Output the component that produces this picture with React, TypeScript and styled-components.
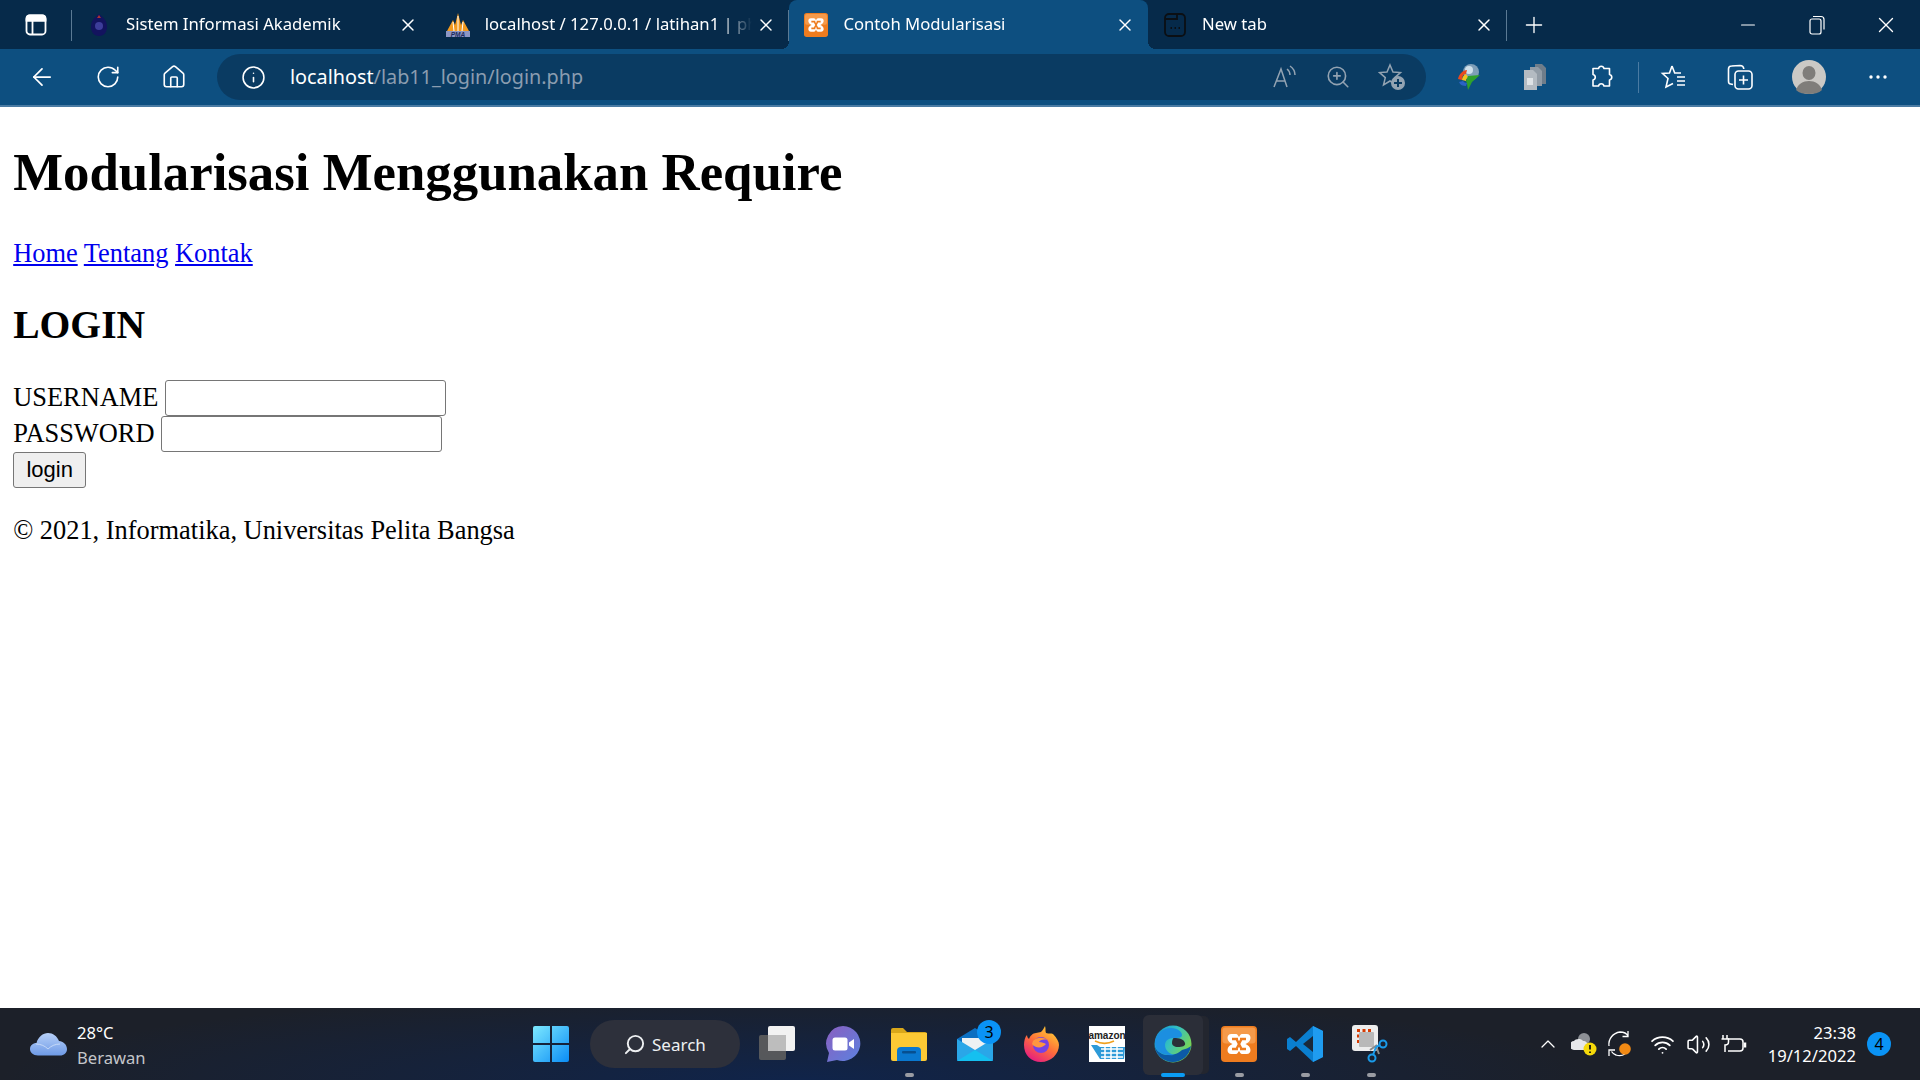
import React, { FC, ReactNode } from 'react';
import styled, { createGlobalStyle } from 'styled-components';
import { ArrowLeft, ChevronUp, Home as HomeIcon, Info, Minus, Plus, RotateCw, Search, Volume2, Wifi, X, ZoomIn } from 'lucide-react';

const UI_FONT = '"Noto Sans", "Open Sans", sans-serif';
const STRIP = '#062a4a';
const TOOLBAR = '#0d4f80';

const GlobalStyle = createGlobalStyle`
	html, body {
		margin: 0;
		padding: 0;
		background: #fff;
	}
`;

const Screen = styled.div`
	display: flex;
	flex-direction: column;
	width: 1920px;
	height: 1080px;
	overflow: hidden;
`;

const TabStrip = styled.div`
	display: flex;
	flex: none;
	height: 49px;
	background: ${STRIP};
	color: #fff;
	font-family: ${UI_FONT};
	font-size: 16.7px;
`;

const WorkspaceButton = styled.div`
	display: flex;
	flex: none;
	align-items: center;
	justify-content: center;
	width: 72px;
	height: 49px;
	position: relative;

	&::after {
		content: '';
		position: absolute;
		right: 0;
		top: 10px;
		width: 1px;
		height: 31px;
		background: #5b7a94;
	}
`;

const Tab = styled.div<{ $active?: boolean; $divider?: boolean }>`
	display: flex;
	flex: none;
	align-items: center;
	position: relative;
	width: 358.7px;
	height: 49px;
	border-radius: 8px 8px 0 0;
	background: ${(p) => (p.$active ? TOOLBAR : 'transparent')};

	&::after {
		content: ${(p) => (p.$divider ? "''" : 'none')};
		position: absolute;
		right: 0;
		top: 10px;
		width: 1px;
		height: 31px;
		background: #5b7a94;
	}

	${(p) =>
		p.$active &&
		`
		&::before {
			content: '';
			position: absolute;
			left: -8px;
			right: -8px;
			bottom: 0;
			height: 8px;
			z-index: 0;
			background:
				radial-gradient(circle at 0 0, transparent 8px, ${TOOLBAR} 8px) left bottom / 8px 8px no-repeat,
				radial-gradient(circle at 100% 0, transparent 8px, ${TOOLBAR} 8px) right bottom / 8px 8px no-repeat;
		}
	`}
`;

const Favicon = styled.div`
	display: flex;
	flex: none;
	align-items: center;
	justify-content: center;
	width: 54px;
	height: 30px;
	position: relative;
`;

const TabTitle = styled.div`
	flex: 1;
	min-width: 0;
	margin-top: -2px;
	overflow: hidden;
	white-space: nowrap;
	position: relative;
	mask-image: linear-gradient(to right, #000 88%, transparent 100%);
`;

const TabClose = styled.div`
	display: flex;
	flex: none;
	align-items: center;
	justify-content: center;
	width: 24px;
	height: 24px;
	margin: 0 11px 0 2px;
	position: relative;
`;

const NewTabButton = styled.div`
	display: flex;
	align-items: center;
	justify-content: center;
	width: 54px;
	height: 49px;
`;

const WindowControls = styled.div`
	display: flex;
	margin-left: auto;
`;

const WindowButton = styled.div`
	display: flex;
	align-items: center;
	justify-content: center;
	width: 69px;
	height: 49px;
`;

const Toolbar = styled.div`
	display: flex;
	flex: none;
	align-items: center;
	height: 56px;
	padding: 0 10px 0 9px;
	background: ${TOOLBAR};
	border-bottom: 2px solid #4a7ba3;
`;

const NavButton = styled.div`
	display: flex;
	flex: none;
	align-items: center;
	justify-content: center;
	width: 66px;
	height: 46px;
`;

const AddressBar = styled.div`
	display: flex;
	flex: none;
	align-items: center;
	box-sizing: border-box;
	width: 1209px;
	height: 46px;
	margin-left: 10px;
	padding-right: 7px;
	border-radius: 23px;
	background: #0a3b62;
	font-family: ${UI_FONT};
	font-size: 19.8px;
`;

const SiteInfo = styled.div`
	display: flex;
	flex: none;
	align-items: center;
	justify-content: center;
	width: 73px;
	color: #fff;
`;

const Url = styled.div`
	flex: 1;
	margin-top: -2px;
	color: #8b9db0;
	white-space: nowrap;
`;

const UrlHost = styled.span`
	color: #fff;
`;

const AddressAction = styled.div`
	display: flex;
	flex: none;
	align-items: center;
	justify-content: center;
	width: 54px;
	color: #93a3b2;
`;

const ToolbarIcons = styled.div`
	display: flex;
	flex: none;
	align-items: center;
	margin-left: 10px;
`;

const ToolIcon = styled.div<{ $wide?: boolean }>`
	display: flex;
	flex: none;
	align-items: center;
	justify-content: center;
	width: ${(p) => (p.$wide ? 72 : 66)}px;
	height: 46px;
	color: #fff;
`;

const ToolDivider = styled.div`
	flex: none;
	width: 1px;
	height: 31px;
	margin: 0 2px 0 4px;
	background: #4a7ba3;
`;

const Page = styled.main`
	flex: 1;
	padding: 0 13.2px;
	background: #fff;
	color: #000;
	font-family: 'Liberation Serif', 'Times New Roman', serif;
	font-size: 26.4px;
`;

const Heading = styled.h1`
	margin: 35.4px 0;
	font-size: 52.8px;
	font-weight: 700;
`;

const NavLinks = styled.nav`
	margin: 26.4px 0;
`;

const NavLink = styled.a`
	color: #0000ee;
	text-decoration: underline;
`;

const LoginHeading = styled.h2`
	margin: 32.9px 0 32px;
	font-size: 39.6px;
	font-weight: 700;
`;

const FormRow = styled.div`
	display: flex;
	align-items: center;
	gap: 6.6px;
	height: 36px;
`;

const TextInput = styled.input`
	box-sizing: border-box;
	width: 281px;
	height: 36px;
	padding: 1px 3px;
	border: 1px solid #767676;
	border-radius: 3px;
	background: #fff;
`;

const SubmitButton = styled.button`
	display: block;
	box-sizing: border-box;
	width: 73px;
	height: 36px;
	padding: 0;
	border: 1px solid #767676;
	border-radius: 3px;
	background: #efefef;
	color: #000;
	font-family: 'Liberation Sans', Arial, sans-serif;
	font-size: 22px;
`;

const Footer = styled.footer`
	margin-top: 27.4px;
`;

const Taskbar = styled.footer`
	display: flex;
	flex: none;
	align-items: center;
	height: 72px;
	background: radial-gradient(ellipse 800px 90px at 800px 100%, #10244a 0%, rgba(16, 36, 74, 0) 100%), #1c2029;
	color: #fff;
	font-family: ${UI_FONT};
	font-size: 16.6px;
`;

const Weather = styled.div`
	display: flex;
	flex: none;
	align-items: center;
	gap: 10px;
	box-sizing: border-box;
	width: 518px;
	padding-left: 30px;
`;

const WeatherText = styled.div`
	line-height: 25px;
	margin-top: 1px;
`;

const WeatherNote = styled.div`
	color: #c4c6ca;
`;

const TaskSlot = styled.div<{ $active?: boolean }>`
	display: flex;
	flex: none;
	align-items: center;
	justify-content: center;
	position: relative;
	width: 66px;
	height: 72px;

	${(p) =>
		p.$active &&
		`
		&::before {
			content: '';
			position: absolute;
			left: 3px;
			top: 7px;
			width: 60px;
			height: 60px;
			border-radius: 6px;
			background: #2b2e38;
			box-shadow: 7px 0 0 -1px #23262f;
		}
		& > svg { position: relative; }
	`}
`;

const Indicator = styled.span<{ $active?: boolean }>`
	position: absolute;
	left: 50%;
	bottom: 3px;
	width: ${(p) => (p.$active ? 24 : 9)}px;
	height: 4px;
	margin-left: ${(p) => (p.$active ? -12 : -4.5)}px;
	border-radius: 2px;
	background: ${(p) => (p.$active ? '#0a9cf5' : '#9a9ca3')};
`;

const CountBadge = styled.span`
	position: absolute;
	display: flex;
	align-items: center;
	justify-content: center;
	border-radius: 50%;
	background: #0a93f5;
	color: #000;
	font-size: 16px;
	right: 7px;
	top: 12px;
	width: 24px;
	height: 24px;
`;

const SearchPill = styled.div`
	display: flex;
	flex: none;
	align-items: center;
	gap: 6px;
	box-sizing: border-box;
	width: 150px;
	height: 48px;
	margin: 0 4px 0 6px;
	padding-left: 33px;
	border-radius: 24px;
	background: #2d303b;
	color: #eef0f2;
	font-size: 17px;
`;

const SearchGlyph = styled(Search)`
	transform: scaleX(-1);
`;

const Tray = styled.div`
	display: flex;
	flex: none;
	align-items: center;
	margin-left: auto;
	padding-right: 29px;
`;

const TrayIcon = styled.div<{ $wide?: boolean }>`
	display: flex;
	align-items: center;
	justify-content: center;
	width: 36px;
	height: 36px;
	margin-right: ${(p) => (p.$wide ? 6 : 0)}px;
`;

const Clock = styled.div`
	width: 104px;
	text-align: right;
	font-size: 16.6px;
	line-height: 23px;
`;

const NotifyBadge = styled.div`
	display: flex;
	align-items: center;
	justify-content: center;
	width: 24px;
	height: 24px;
	margin-left: 11px;
	border-radius: 50%;
	background: #0a93f5;
	color: #000;
	font-size: 16px;
`;

const Workspace = () => (
	<svg width="22" height="22" viewBox="0 0 22 22" fill="none" stroke="#fff" strokeWidth="1.8">
		<rect x="1.5" y="1.5" width="19" height="19" rx="3.5" />
		<path d="M1.5 6.5h19M7.5 6.5v14" />
		<path d="M4 1.500h14a3 3 0 0 1 2.500 3v2h-19v-2a3 3 0 0 1 2.500-3z" fill="#fff" />
	</svg>
);

const CampusLogo = () => (
	<svg width="20" height="24" viewBox="0 0 20 24">
		<path d="M10 1C5 5 2 8 2 14c0 5 3 9 8 9s8-4 8-9c0-6-3-9-8-13z" fill="#13135e" />
		<circle cx="10" cy="13" r="4" fill="#3d3d9a" />
		<path d="M8 5h4l-2-3z" fill="#a33" />
	</svg>
);

const PmaLogo = () => (
	<svg width="26" height="26" viewBox="0 0 26 26">
		<path d="M2 19L8 8l2 5 3-12 3 12 2-5 6 11z" fill="#f29a1f" />
		<path d="M8 10l1 9M13 4v15M18 10l-1 9" stroke="#fff" strokeWidth="1" />
		<rect x="1" y="19" width="24" height="6" fill="#8c96c4" />
		<text x="13" y="24.500" textAnchor="middle" fontSize="6.5" fontWeight="700" fontStyle="italic" fill="#1d2a5c" fontFamily="Liberation Sans">PMA</text>
	</svg>
);

const XamppLogo: FC<{ size: number }> = ({ size }) => (
	<svg width={size} height={size} viewBox="0 0 36 36">
		<rect width="36" height="36" rx="4" fill="#ee7c1f" />
		<rect x="1.500" y="1.500" width="33" height="16" rx="3" fill="#f59a4a" />
		<path
			d="M15 8h-4.500C7.500 8 6.500 10 6.500 12c0 3 2.500 5 5 6-2.500 1-5 3-5 6 0 2 1 4 4 4H15c1.500 0 2-1.500 3-3 1 1.500 1.500 3 3 3h4.500c3 0 4-2 4-4 0-3-2.500-5-5-6 2.500-1 5-3 5-6 0-2-1-4-4-4H21c-1.500 0-2 1.500-3 3-1-1.500-1.500-3-3-3z"
			fill="#fff"
		/>
		<path d="M11 13h6M19 13h6M11 23h6M19 23h6M15.500 13l2.500 5-2.500 5M20.500 13L18 18l2.500 5" stroke="#ee7c1f" strokeWidth="2.400" fill="none" />
	</svg>
);

const NewTabIcon = () => (
	<svg width="22" height="24" viewBox="0 0 22 24" fill="none" stroke="#0b0f14" strokeWidth="1.800">
		<rect x="1" y="1" width="20" height="22" rx="4" />
		<path d="M1 6h12V1" />
		<path d="M6.500 15h1.500M10.500 15h1.500M14.500 15H16" strokeWidth="2" />
	</svg>
);

const ReadAloud = () => (
	<svg width="26" height="26" viewBox="0 0 26 26" fill="none" stroke="currentColor" strokeWidth="1.500">
		<path d="M3 23L10 5l6 18M5.500 17h9" />
		<path d="M16 5c2 1.500 3 3.500 3 6M19 2c3 2 5 5 5 9" />
	</svg>
);

const FavoriteAdd = () => (
	<svg width="28" height="28" viewBox="0 0 28 28" fill="none" stroke="currentColor" strokeWidth="1.500">
		<path d="M12 2l3 7 7.500.6-5.700 5 1.800 7.400L12 18l-6.500 4 1.800-7.400-5.700-5L9 9z" />
		<circle cx="20" cy="20" r="7" fill="currentColor" stroke="none" />
		<path d="M20 16v8M16 20h8" stroke="#0a3b62" strokeWidth="2" />
	</svg>
);

const IdmLogo = () => (
	<svg width="26" height="28" viewBox="0 0 26 28">
		<circle cx="15" cy="9" r="8" fill="#7f9fb8" />
		<circle cx="13" cy="7" r="4" fill="#cfe0ea" />
		<path d="M2 16c1-5 5-9 9-9l-1 4c-3 0-4 3-4 6z" fill="#e8491d" />
		<path d="M6 17c0-3 2-5 4-6l2 3c-1 1-2 2-2 4z" fill="#f4c31d" />
		<path d="M10 18l2-5 12-1-8 7-4 8-1-6z" fill="#2fa12c" />
		<path d="M3 19c1 3 4 4 7 4l1-3c-2 0-3-1-4-2z" fill="#2b62c4" />
	</svg>
);

const DocsIcon = () => (
	<svg width="24" height="28" viewBox="0 0 24 28">
		<path d="M12 1h7l4 4v16H12z" fill="#6f7d8a" />
		<path d="M7 4h8l4 4v15H7z" fill="#929ca6" />
		<path d="M1 7h9l4 4v16H1z" fill="#b4bbc2" />
		<rect x="4" y="15" width="6" height="7" fill="#dfe3e6" />
	</svg>
);

const PuzzlePiece = () => (
	<svg width="26" height="28" viewBox="0 0 26 28" fill="none" stroke="#fff" strokeWidth="1.600" strokeLinejoin="round">
		<path d="M7 5.500h3.500a2.800 2.800 0 0 1 5.500 0H21.500v6a2.800 2.800 0 0 1 0 5.500v6H16a2.800 2.800 0 0 0-5.500 0H5V17a2.800 2.800 0 0 0 0-5.500V5.500z" />
	</svg>
);

const FavoriteList = () => (
	<svg width="28" height="28" viewBox="0 0 28 28" fill="none" stroke="#fff" strokeWidth="1.600">
		<path d="M12 3l2.700 7H21M12 3L9.500 10 2.500 10.500 8 15.500 6 24l7-3.500" />
		<path d="M17 14h8M17 18h8M17 22h8" />
	</svg>
);

const Collections = () => (
	<svg width="28" height="28" viewBox="0 0 28 28" fill="none" stroke="#fff" strokeWidth="1.600">
		<path d="M7 21.500L4.500 21c-1.500 0-2-1.500-2-3V6c0-2 1.500-3 3-3L14 2.500c2 0 3.500 1 3.800 3.500" />
		<rect x="9" y="8" width="17" height="18" rx="3.500" />
		<path d="M17.500 12.500v9M13 17h9" />
	</svg>
);

const Avatar = () => (
	<svg width="34" height="34" viewBox="0 0 34 34">
		<circle cx="17" cy="17" r="17" fill="#cbc9c5" />
		<ellipse cx="17" cy="13" rx="6.500" ry="7" fill="#7f7d7a" />
		<path d="M4 30c2-6 7-9 13-9s11 3 13 9c-3 3-8 4-13 4S7 33 4 30z" fill="#7f7d7a" />
	</svg>
);

const MoreDots = () => (
	<svg width="20" height="6" viewBox="0 0 20 6" fill="#fff">
		<circle cx="3" cy="3" r="1.700" />
		<circle cx="10" cy="3" r="1.700" />
		<circle cx="17" cy="3" r="1.700" />
	</svg>
);

const WeatherCloud = () => (
	<svg width="37" height="24" viewBox="0 0 37 24">
		<defs>
			<linearGradient id="cloud" x1="0" y1="0" x2="0" y2="1">
				<stop offset="0" stopColor="#b7d0f8" />
				<stop offset="1" stopColor="#6e9ae6" />
			</linearGradient>
		</defs>
		<path d="M8 23.500C3 23.500 0 20.500 0 17c0-3.500 3-6 6.500-6C8 5 13 1 18 1c5 0 9 3 11 8 4 .5 8 3.500 8 8 0 4-3 6.500-7 6.500z" fill="url(#cloud)" />
		<path d="M6 12c5 0 9 2 12 5 3-3 7-5 12-5" stroke="#dbe8fb" strokeWidth="1" fill="none" opacity="0.7" />
	</svg>
);

const WindowsLogo = () => (
	<svg width="36" height="36" viewBox="0 0 36 36">
		<defs>
			<linearGradient id="win" x1="0" y1="0" x2="1" y2="1">
				<stop offset="0" stopColor="#7de9ff" />
				<stop offset="1" stopColor="#0a8cf5" />
			</linearGradient>
		</defs>
		<path d="M2 0h15v17H0V2a2 2 0 0 1 2-2zM19 0h15a2 2 0 0 1 2 2v15H19zM0 19h17v17H2a2 2 0 0 1-2-2zM19 19h17v15a2 2 0 0 1-2 2H19z" fill="url(#win)" />
	</svg>
);

const TaskView = () => (
	<svg width="36" height="36" viewBox="0 0 36 36">
		<rect x="9" y="0" width="27" height="25" rx="2" fill="#f2f2f2" />
		<rect x="0" y="9" width="27" height="25" rx="2" fill="#5e5e5e" fillOpacity="0.9" />
		<rect x="9" y="9" width="18" height="16" fill="#bdbdbd" />
	</svg>
);

const ChatLogo = () => (
	<svg width="36" height="36" viewBox="0 0 36 36">
		<defs>
			<linearGradient id="chat" x1="0" y1="0" x2="1" y2="1">
				<stop offset="0" stopColor="#8a5fc0" />
				<stop offset="1" stopColor="#5b82e0" />
			</linearGradient>
		</defs>
		<path d="M18 0a17.500 17.500 0 1 1-6 34l-10 2 2-9A17.500 17.500 0 0 1 18 0z" fill="url(#chat)" />
		<rect x="7.500" y="11.500" width="15" height="13" rx="2.500" fill="#fff" />
		<path d="M24 16.500l5-3.500v10l-5-3.500z" fill="#fff" />
	</svg>
);

const ExplorerLogo = () => (
	<svg width="36" height="34" viewBox="0 0 36 34">
		<path d="M0 3a2 2 0 0 1 2-2h10l4 4h18a2 2 0 0 1 2 2v6H0z" fill="#d9a71a" />
		<path d="M0 6h36v26a2 2 0 0 1-2 2H2a2 2 0 0 1-2-2z" fill="#fcc934" />
		<path d="M6 34V24a4 4 0 0 1 4-4h16a4 4 0 0 1 4 4v10z" fill="#0a78cf" />
		<rect x="11" y="24" width="14" height="2.500" rx="1" fill="#064f90" />
	</svg>
);

const MailLogo = () => (
	<svg width="36" height="34" viewBox="0 0 36 34">
		<path d="M0 12L18 1l18 11v22H0z" fill="#0b6fc2" />
		<path d="M5 11h26v10l-13 7L5 21z" fill="#eef1f3" />
		<path d="M0 12l18 11 18-11v20a2 2 0 0 1-2 2H2a2 2 0 0 1-2-2z" fill="#2aa6e8" />
		<path d="M0 34l18-11 18 11z" fill="#15c0f0" />
	</svg>
);

const FirefoxLogo = () => (
	<svg width="36" height="36" viewBox="0 0 36 36">
		<defs>
			<linearGradient id="fx" x1="0.8" y1="0" x2="0.2" y2="1">
				<stop offset="0" stopColor="#ffd533" />
				<stop offset="0.5" stopColor="#ff7139" />
				<stop offset="1" stopColor="#e31587" />
			</linearGradient>
		</defs>
		<path d="M22 0c1 3 0 5 1 7 3 1 5 0 7 1 4 4 6 8 6 11 0 9-8 17-18 17S1 29 1 19c0-4 1-8 3-10 0 2 1 3 2 4 1-3 4-6 7-6l5-1c2-2 3-4 4-6z" fill="url(#fx)" />
		<circle cx="18" cy="19" r="8" fill="#7542e5" />
		<path d="M10 15c4-4 10-4 15-1-5-1-8 0-9 2 3 0 5 1 7 2-4 5-11 4-14 0z" fill="#ff9640" />
	</svg>
);

const AmazonLogo = () => (
	<svg width="36" height="36" viewBox="0 0 36 36">
		<rect width="36" height="36" fill="#fff" />
		<text x="18" y="13" textAnchor="middle" fontSize="10" fontWeight="700" fill="#222" fontFamily="Liberation Sans">amazon</text>
		<path d="M6 15c6 3 13 3 19 0" stroke="#f0a01e" strokeWidth="1.500" fill="none" />
		<path d="M2 19h6l3 2h25l-1 12H11z" fill="#2d9ad8" />
		<path d="M12 23h22M12 27h22M12 31h22M16 21v12M22 21v12M28 21v12" stroke="#fff" strokeWidth="1.500" />
	</svg>
);

const EdgeLogo = () => (
	<svg width="38" height="38" viewBox="0 0 38 38">
		<defs>
			<linearGradient id="edge" x1="0" y1="0" x2="1" y2="0.6">
				<stop offset="0" stopColor="#0d8fd8" />
				<stop offset="0.5" stopColor="#35c1c0" />
				<stop offset="1" stopColor="#7fd64a" />
			</linearGradient>
		</defs>
		<circle cx="19" cy="19" r="18.500" fill="url(#edge)" />
		<path d="M19 37C9 37 .5 29 .5 19 .5 25 7 30 14 30c6 0 11-2 14-5 3-1 7-2 9-4-1 9-9 16-18 16z" fill="#0c5aa6" />
		<path d="M1 18C1 10 8 3 17 3c7 0 11 4 11 7 0 3-4 3-8 3-6 0-9 3-9 7 0 5 4 9 10 10C9 31 1 27 1 18z" fill="#1c8fe0" />
		<path d="M20 13c5 0 10 1 11 5 1 3-3 4-7 4-4 0-6-2-6-4 0-3 1-5 2-5z" fill="#2b2e38" />
	</svg>
);

const VsCodeLogo = () => (
	<svg width="36" height="36" viewBox="0 0 36 36">
		<path d="M26 0l10 5v26l-10 5L9 20 3 25l-3-2V13l3-2 6 5z" fill="#0a7fd0" />
		<path d="M26 0l10 5v26l-10 5z" fill="#1f9cf0" />
		<path d="M26 10v16l-10-8z" fill="#1c2029" opacity="0.9" />
	</svg>
);

const SnipLogo = () => (
	<svg width="38" height="38" viewBox="0 0 38 38">
		<rect x="0" y="0" width="26" height="26" rx="3" fill="#ededed" />
		<path d="M5 4h3v3H5zM10.500 4h3v3h-3zM16 4h3v3h-3zM5 9.500h3v3H5zM5 15h3v3H5z" fill="#d83b01" />
		<rect x="7" y="7" width="15" height="15" rx="1" fill="#b9b9b9" />
		<path d="M18 25l7-5M24 21l3 8" stroke="#8a8a8a" strokeWidth="2" />
		<circle cx="31" cy="19" r="3.500" fill="none" stroke="#1a9bea" strokeWidth="2" />
		<circle cx="20" cy="33" r="3.500" fill="none" stroke="#1a9bea" strokeWidth="2" />
		<path d="M28 20l-4 2M21 30l3-8" stroke="#1a9bea" strokeWidth="2" />
	</svg>
);

const OneDriveWarning = () => (
	<svg width="26" height="26" viewBox="0 0 26 26">
		<circle cx="13" cy="8" r="6" fill="#8d9096" />
		<path d="M3 19a4.500 4.500 0 0 1 0-9c1-2 7-3 9 0 3 0 5 2 5 5v4z" fill="#e7e8ea" />
		<circle cx="19" cy="18" r="6.500" fill="#f5d90a" />
		<path d="M19 14v4.500M19 20.500v1.500" stroke="#111" strokeWidth="1.800" />
	</svg>
);

const SyncDot = () => (
	<svg width="26" height="28" viewBox="0 0 26 28" fill="none" stroke="#fff" strokeWidth="1.300">
		<path d="M2 16C1 9 6 3 13 2c4 0 7 2 8 4M21 1v5.500h-5.500" />
		<path d="M18 24c-3 2-6 2-9 1-2-.5-3.500-2-4.500-3.500M2 26v-6h6" />
		<circle cx="18" cy="19" r="5.800" fill="#f28a14" stroke="none" />
	</svg>
);

const PlugBattery = () => (
	<svg width="26" height="22" viewBox="0 0 26 22" fill="none" stroke="#fff" strokeWidth="1.500">
		<path d="M2 2v4M6 2v4M.5 6h7v3c0 2-1.500 3-3.500 3v7" />
		<path d="M7 6h12c2 0 3 1 3 3v6c0 2-1 3-3 3H7" />
		<path d="M24 9.500v5" strokeWidth="2.500" />
	</svg>
);

const TrayList: { key: string; wide?: boolean; icon: ReactNode }[] = [
	{ key: 'chevron', icon: <ChevronUp size={24} color="#fff" strokeWidth={1.25} /> },
	{ key: 'cloud', icon: <OneDriveWarning /> },
	{ key: 'sync', wide: true, icon: <SyncDot /> },
	{ key: 'wifi', icon: <Wifi size={25} color="#fff" strokeWidth={1.75} /> },
	{ key: 'volume', icon: <Volume2 size={25} color="#fff" strokeWidth={1.5} /> },
	{ key: 'power', icon: <PlugBattery /> },
];

export default function App() {
	return (
		<Screen>
			<GlobalStyle />
			<TabStrip>
				<WorkspaceButton>
					<Workspace />
				</WorkspaceButton>
				<Tab>
					<Favicon>
						<CampusLogo />
					</Favicon>
					<TabTitle>Sistem Informasi Akademik</TabTitle>
					<TabClose>
						<X size={20} color="#fff" strokeWidth={1.75} />
					</TabClose>
				</Tab>
				<Tab $divider>
					<Favicon>
						<PmaLogo />
					</Favicon>
					<TabTitle>localhost / 127.0.0.1 / latihan1 | phpMyAdmin</TabTitle>
					<TabClose>
						<X size={20} color="#fff" strokeWidth={1.75} />
					</TabClose>
				</Tab>
				<Tab $active>
					<Favicon>
						<XamppLogo size={24} />
					</Favicon>
					<TabTitle>Contoh Modularisasi</TabTitle>
					<TabClose>
						<X size={20} color="#fff" strokeWidth={1.75} />
					</TabClose>
				</Tab>
				<Tab $divider>
					<Favicon>
						<NewTabIcon />
					</Favicon>
					<TabTitle>New tab</TabTitle>
					<TabClose>
						<X size={20} color="#fff" strokeWidth={1.75} />
					</TabClose>
				</Tab>
				<NewTabButton>
					<Plus size={26} color="#fff" strokeWidth={1.25} />
				</NewTabButton>
				<WindowControls>
					<WindowButton>
						<Minus size={22} color="#fff" strokeWidth={1.25} />
					</WindowButton>
					<WindowButton>
						<svg width="16" height="20" viewBox="0 0 16 20" fill="none" stroke="#fff" strokeWidth="1.200">
							<rect x="1" y="4" width="11" height="15" rx="2" />
							<path d="M4 1.500h8c2 0 3 1 3 3v10" />
						</svg>
					</WindowButton>
					<WindowButton>
						<X size={26} color="#fff" strokeWidth={1.25} />
					</WindowButton>
				</WindowControls>
			</TabStrip>
			<Toolbar>
				<NavButton>
					<ArrowLeft size={28} color="#fff" strokeWidth={1.5} />
				</NavButton>
				<NavButton>
					<RotateCw size={26} color="#fff" strokeWidth={1.5} />
				</NavButton>
				<NavButton>
					<HomeIcon size={26} color="#fff" strokeWidth={1.5} />
				</NavButton>
				<AddressBar>
					<SiteInfo>
						<Info size={25} strokeWidth={1.5} />
					</SiteInfo>
					<Url>
						<UrlHost>localhost</UrlHost>/lab11_login/login.php
					</Url>
					<AddressAction>
						<ReadAloud />
					</AddressAction>
					<AddressAction>
						<ZoomIn size={26} strokeWidth={1.5} />
					</AddressAction>
					<AddressAction>
						<FavoriteAdd />
					</AddressAction>
				</AddressBar>
				<ToolbarIcons>
					<ToolIcon>
						<IdmLogo />
					</ToolIcon>
					<ToolIcon>
						<DocsIcon />
					</ToolIcon>
					<ToolIcon>
						<PuzzlePiece />
					</ToolIcon>
					<ToolDivider />
					<ToolIcon>
						<FavoriteList />
					</ToolIcon>
					<ToolIcon>
						<Collections />
					</ToolIcon>
					<ToolIcon $wide>
						<Avatar />
					</ToolIcon>
					<ToolIcon>
						<MoreDots />
					</ToolIcon>
				</ToolbarIcons>
			</Toolbar>
			<Page>
				<Heading>Modularisasi Menggunakan Require</Heading>
				<NavLinks>
					<NavLink href="#">Home</NavLink> <NavLink href="#">Tentang</NavLink> <NavLink href="#">Kontak</NavLink>
				</NavLinks>
				<LoginHeading>LOGIN</LoginHeading>
				<form>
					<FormRow>
						USERNAME
						<TextInput type="text" />
					</FormRow>
					<FormRow>
						PASSWORD
						<TextInput type="password" />
					</FormRow>
					<SubmitButton type="button">login</SubmitButton>
				</form>
				<Footer>© 2021, Informatika, Universitas Pelita Bangsa</Footer>
			</Page>
			<Taskbar>
				<Weather>
					<WeatherCloud />
					<WeatherText>
						<div>28°C</div>
						<WeatherNote>Berawan</WeatherNote>
					</WeatherText>
				</Weather>
				<TaskSlot>
					<WindowsLogo />
				</TaskSlot>
				<SearchPill>
					<SearchGlyph size={23} strokeWidth={2} />
					Search
				</SearchPill>
				<TaskSlot>
					<TaskView />
				</TaskSlot>
				<TaskSlot>
					<ChatLogo />
				</TaskSlot>
				<TaskSlot>
					<ExplorerLogo />
					<Indicator />
				</TaskSlot>
				<TaskSlot>
					<MailLogo />
					<CountBadge>3</CountBadge>
				</TaskSlot>
				<TaskSlot>
					<FirefoxLogo />
				</TaskSlot>
				<TaskSlot>
					<AmazonLogo />
				</TaskSlot>
				<TaskSlot $active>
					<EdgeLogo />
					<Indicator $active />
				</TaskSlot>
				<TaskSlot>
					<XamppLogo size={36} />
					<Indicator />
				</TaskSlot>
				<TaskSlot>
					<VsCodeLogo />
					<Indicator />
				</TaskSlot>
				<TaskSlot>
					<SnipLogo />
					<Indicator />
				</TaskSlot>
				<Tray>
					{TrayList.map((item) => (
						<TrayIcon key={item.key} $wide={item.wide}>
							{item.icon}
						</TrayIcon>
					))}
					<Clock>
						<div>23:38</div>
						<div>19/12/2022</div>
					</Clock>
					<NotifyBadge>4</NotifyBadge>
				</Tray>
			</Taskbar>
		</Screen>
	);
}
